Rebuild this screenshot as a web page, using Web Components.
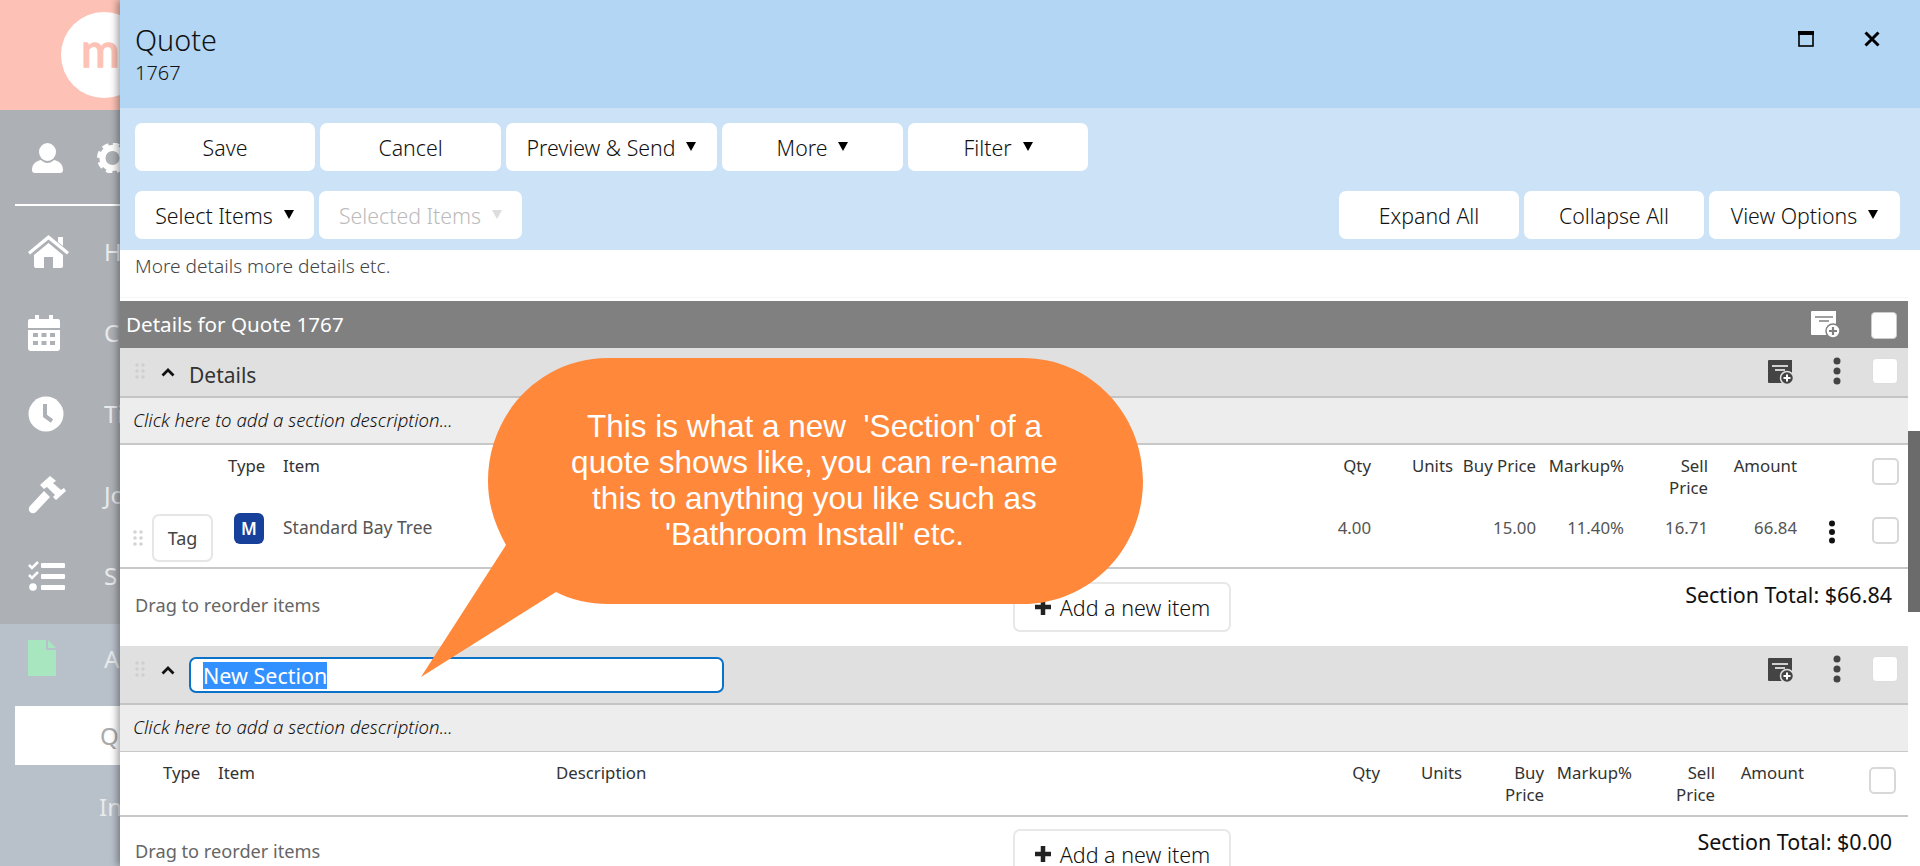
<!DOCTYPE html>
<html><head><meta charset="utf-8"><title>Quote 1767</title>
<style>
html,body{margin:0;padding:0;height:866px;overflow:hidden;background:#fff}
body{font-family:"Noto Sans","Open Sans",sans-serif;color:#222}
svg{display:block;flex:none}
</style></head><body>
<template id="t-app"><style>
:host{display:flex;width:1920px;height:866px;overflow:hidden;position:relative}
</style><slot name="side"></slot><slot name="main"></slot><slot name="over"></slot></template>

<template id="t-side"><style>
:host{display:flex;flex-direction:column;width:120px;flex:none;height:866px;overflow:hidden;background:#adb1b6}
.top{height:110px;background:#fdc2b5;flex:none;padding:12px 0 0 61px;box-sizing:border-box}
.logo{width:86px;height:86px;border-radius:50%;background:#fff;box-sizing:border-box;padding-left:20px;font:400 47px/74px Lato,sans-serif;-webkit-text-stroke:1.500px #fdc2b5;color:#fdc2b5;overflow:hidden;white-space:nowrap}
.me{height:94px;flex:none;display:flex;padding:33px 0 0 32px;box-sizing:border-box;gap:34px}
hr{border:0;height:2px;background:#fff;margin:0 0 5px 15px;flex:none}
.low{flex:1;background:#b8c0ca;padding-top:14px}
</style><div class="top"><div class="logo">m</div></div>
<div class="me"><slot name="me"></slot></div><hr>
<slot name="nav"></slot>
<div class="low"><slot name="low"></slot></div></template>

<template id="t-nav"><style>
:host{display:flex;align-items:center;height:81px;box-sizing:border-box;padding-left:28px;overflow:hidden;white-space:nowrap;font-size:24px;color:#e8eaec}
.i{width:76px;flex:none}
:host([active]){background:#fff;color:#aaa;margin-left:15px;height:59px;padding-left:0;margin-top:14px;margin-bottom:11px}
:host([active]) .i{width:85px}
:host([sub]){padding-left:0;height:60px}
:host([sub]) .i{width:99px}
</style><div class="i"><slot name="icon"></slot></div><slot></slot></template>

<template id="t-panel"><style>
:host{display:flex;flex-direction:column;width:1800px;flex:none;height:866px;position:relative;background:#fff;box-shadow:-3px 0 7px rgba(0,0,0,.35)}
.head{height:108px;background:#b2d6f4;flex:none;display:flex;justify-content:space-between;padding:22px 40px 0 15px;box-sizing:border-box}
h1{margin:0;font-weight:300;font-size:28.800px;line-height:36px;color:#111}
.sub{font-size:20px;line-height:30px;color:#111;font-weight:300}
.win{display:flex;gap:50px;padding-top:9px}
.tools{height:142px;background:#cbe2f7;flex:none;padding:15px 20px 0 15px;box-sizing:border-box;display:flex;flex-direction:column;gap:20px}
.r{display:flex;gap:5px}
.sp{flex:1}
.body{flex:1;display:flex;min-height:0}
.content{flex:1;min-width:0;overflow:hidden}
.bar{width:12px;flex:none;padding-top:181px;box-sizing:border-box}
.thumb{height:181px;background:#6b6b6b}
.note{height:48px;box-sizing:border-box;padding:4px 0 0 15px;font-size:19.100px;font-weight:300;line-height:24px;color:#444;border-bottom:1px solid #f6f6f6;margin-bottom:3px}
</style>
<div class="head"><div><h1>Quote</h1><div class="sub">1767</div></div>
<div class="win">
<svg width="16" height="16" viewBox="0 0 16 16"><rect x="1" y="1" width="14" height="14" fill="none" stroke="#000" stroke-width="1.6"/><rect x="0" y="0" width="16" height="4" fill="#000"/></svg>
<svg width="16" height="16" viewBox="0 0 16 16"><path d="M1.500 1.500l13 13M14.500 1.500l-13 13" stroke="#000" stroke-width="3"/></svg>
</div></div>
<div class="tools"><div class="r"><slot name="row1"></slot></div>
<div class="r"><slot name="row2"></slot><div class="sp"></div><slot name="row2r"></slot></div></div>
<div class="body"><div class="content"><div class="note">More details more details etc.</div><slot></slot></div><div class="bar"><div class="thumb"></div></div></div></template>

<template id="t-btn"><style>
:host{display:flex;align-items:center;justify-content:center;gap:11px;height:48px;box-sizing:border-box;background:#fff;border-radius:7px;font-size:21.300px;font-weight:300;color:#111;white-space:nowrap;flex:none}
:host([off]){color:#bbb}
.c{width:0;height:0;border-left:5.500px solid transparent;border-right:5.500px solid transparent;border-top:9px solid currentColor;margin-top:-1px;display:none;color:#000}
:host([caret]) .c{display:block}
:host([off]) .c{color:#ddd}
</style><slot></slot><i class="c"></i></template>

<template id="t-bar"><style>
:host{display:flex;justify-content:space-between;height:47px;background:#808080;color:#fff;font-size:20.600px;line-height:27px;padding:10px 11px 0 6px;box-sizing:border-box}
.r{display:flex;gap:30px}
.cb{width:26px;height:27px;background:#fff;border:1px solid #ccc;border-radius:4px;box-sizing:border-box;margin-top:1px}
</style><div>Details for Quote 1767</div><div class="r"><slot></slot><div class="cb"></div></div></template>

<template id="t-shead"><style>
:host{display:flex;align-items:flex-start;background:#e0e0e0;border-bottom:2px solid #c4c4c4;height:50px;box-sizing:border-box;padding-left:15px;font-size:21px;color:#333}
:host([tall]){height:59px}
.d{margin-top:15px;flex:none}
.c{margin:20px 14px 0 16px;flex:none}
.t{flex:1;min-width:0;padding-top:13px;line-height:28px}
:host([tall]) .t{padding-top:11px}
.ic{margin:12px 39px 0 0;flex:none}
.m{margin:9px 31px 0 0;flex:none}
.b{width:26px;height:26px;margin:10px 10px 0 0;background:#fff;border:1px solid #ddd;border-radius:4px;box-sizing:border-box;flex:none}
</style>
<svg class="d" width="10" height="16" viewBox="0 0 10 16" fill="#cfcfcf"><circle cx="2" cy="2" r="1.800"/><circle cx="8" cy="2" r="1.800"/><circle cx="2" cy="8" r="1.800"/><circle cx="8" cy="8" r="1.800"/><circle cx="2" cy="14" r="1.800"/><circle cx="8" cy="14" r="1.800"/></svg>
<svg class="c" width="14" height="9" viewBox="0 0 14 9"><path d="M1.500 7.500L7 2l5.500 5.500" fill="none" stroke="#111" stroke-width="2.800"/></svg>
<div class="t"><slot></slot></div>
<svg class="ic" width="26" height="25" viewBox="0 0 26 25"><path d="M1 0h23v23H1a1 1 0 0 1-1-1V1a1 1 0 0 1 1-1z" fill="#444"/><path d="M4 6h16M7 10h10" stroke="#fff" stroke-width="1.500"/><circle cx="19" cy="18" r="6.500" fill="#444" stroke="#e0e0e0" stroke-width="1.500"/><path d="M15.500 18h7M19 14.500v7" stroke="#fff" stroke-width="2"/></svg>
<svg class="m" width="8" height="28" viewBox="0 0 8 28" fill="#444"><circle cx="4" cy="4" r="3.500"/><circle cx="4" cy="14" r="3.500"/><circle cx="4" cy="24" r="3.500"/></svg>
<div class="b"></div></template>

<template id="t-input"><style>
:host{display:block;width:535px;height:36px;box-sizing:border-box;background:#fff;border:2px solid #0a72c8;border-radius:7px;padding:3px 12px;font-size:21.500px;line-height:26px;color:#fff}
span{background:#3390ff;display:inline-block;line-height:27px}
</style><span><slot></slot></span></template>

<template id="t-desc"><style>
:host{display:block;background:#ededed;border-bottom:2px solid #c8c8c8;height:47px;box-sizing:border-box;padding:10px 0 0 13px;font-size:18.600px;font-weight:300;line-height:24px;font-style:italic;color:#111}
:host([thin]){border-bottom-width:1px}
</style><slot></slot></template>

<template id="t-row"><style>
:host{display:grid;align-items:start;font-size:16.800px;line-height:22px;box-sizing:border-box;color:#333}
:host([type=h1]){grid-template-columns:108px 55px 1017px 71px 82px 83px 88px 84px 89px 75px 36px;height:54px;padding-top:10px}
:host([type=r1]){grid-template-columns:108px 55px 1017px 71px 82px 83px 88px 84px 89px 75px 36px;height:70px;border-bottom:2px solid #c8c8c8;color:#555}
:host([type=h2]){grid-template-columns:43px 55px 338px 764px 60px 82px 82px 88px 83px 89px 65px 39px;height:65px;padding-top:10px;border-bottom:2px solid #c8c8c8}
</style><slot></slot></template>

<template id="t-cell"><style>
:host{display:block;min-width:0}
:host([r]){text-align:right}
</style><slot></slot></template>

<template id="t-tag"><style>
:host{display:flex;align-items:flex-start}
.d{margin:31px 9px 0 13px;flex:none}
.t{width:61px;height:48px;box-sizing:border-box;margin-top:15px;background:#fff;border:2px solid #e6e6e6;border-radius:7px;display:flex;align-items:center;justify-content:center;font-size:18px;color:#444;flex:none}
</style><svg class="d" width="10" height="16" viewBox="0 0 10 16" fill="#d4d4d4"><circle cx="2" cy="2" r="1.800"/><circle cx="8" cy="2" r="1.800"/><circle cx="2" cy="8" r="1.800"/><circle cx="8" cy="8" r="1.800"/><circle cx="2" cy="14" r="1.800"/><circle cx="8" cy="14" r="1.800"/></svg><div class="t"><slot></slot></div></template>

<template id="t-badge"><style>
:host{display:flex;width:30px;height:31px;margin:14px 0 0 6px;background:#17409a;border-radius:6px;color:#fff;align-items:center;justify-content:center;font-size:17px;font-weight:600}
</style><slot></slot></template>

<template id="t-check"><style>
:host{display:block;width:27px;height:27px;box-sizing:border-box;background:#fff;border:2px solid #d8d8d8;border-radius:5px}
</style></template>

<template id="t-foot"><style>
:host{display:grid;grid-template-columns:893px 218px 1fr;height:77px;box-sizing:border-box;padding-top:13px;align-items:start}
:host([tall]){height:120px;padding-top:12px}
.l{padding:10px 0 0 15px;font-size:18.200px;line-height:26px;color:#666}
:host([tall]) .l{padding-top:9px}
.a{height:50px;box-sizing:border-box;background:#fff;border:2px solid #e8e8e8;border-radius:7px;display:flex;align-items:center;justify-content:center;gap:8px;font-size:21.500px;font-weight:300;color:#111}
.t{text-align:right;padding:0 16px 0 0;font-size:21.500px;line-height:26px;color:#111;white-space:nowrap}
</style><div class="l">Drag to reorder items</div><div class="a"><svg width="18" height="18" viewBox="0 0 18 18"><path d="M9 1v16M1 9h16" stroke="#222" stroke-width="4.500"/></svg>Add a new item</div><div class="t"><slot></slot></div></template>

<template id="t-callout"><style>
:host{position:absolute;left:415px;top:350px;width:740px;height:335px;display:block}
svg{position:absolute;left:0;top:0}
.x{position:absolute;left:72px;top:58px;width:655px;text-align:center;font:31.500px/36px "Liberation Sans",Arial,sans-serif;color:#fff;white-space:pre}
</style>
<svg width="740" height="335" viewBox="415 350 740 335"><path d="M608 358H1023C1090 358 1143 413 1143 481C1143 549 1090 604 1023 604H608C590 604 571 600 556 592L421 677L506 545C495 525 488 505 488 481C488 413 541 358 608 358Z" fill="#ff883a"/></svg>
<div class="x"><slot></slot></div></template>

<script>
const def=(n,t)=>customElements.define(n,class extends HTMLElement{constructor(){super();this.attachShadow({mode:'open'}).appendChild(document.getElementById(t).content.cloneNode(true))}});
[['x-app','t-app'],['x-side','t-side'],['x-nav','t-nav'],['x-panel','t-panel'],['x-btn','t-btn'],['x-bar','t-bar'],['x-shead','t-shead'],['x-input','t-input'],['x-desc','t-desc'],['x-row','t-row'],['x-cell','t-cell'],['x-tag','t-tag'],['x-badge','t-badge'],['x-check','t-check'],['x-foot','t-foot'],['x-callout','t-callout']].forEach(a=>def(a[0],a[1]));
</script>

<x-app>
<x-side slot="side">
<svg slot="me" width="31" height="30" viewBox="0 0 31 30" fill="#fff"><ellipse cx="15.500" cy="9" rx="8.500" ry="9"/><path d="M0 27c0-6 4-9 9-10 2 2 4 3 6.500 3s4.500-1 6.500-3c5 1 9 4 9 10 0 2-1 3-3 3H3c-2 0-3-1-3-3z"/></svg>
<svg slot="me" width="31" height="30" viewBox="0 0 31 30"><circle cx="15.500" cy="15" r="10" fill="none" stroke="#fff" stroke-width="6"/><circle cx="15.500" cy="15" r="13" fill="none" stroke="#fff" stroke-width="5" stroke-dasharray="6 4.200"/></svg>
<x-nav slot="nav">H<svg slot="icon" width="41" height="33" viewBox="0 0 41 33" fill="#fff"><path d="M20.500 0L41 17l-2 2.500L20.500 4.500 2 19.500 0 17z"/><path d="M30 2h5v9l-5-4z"/><path d="M6 20L20.500 8 35 20v11a2 2 0 0 1-2 2H25V22h-9v11H8a2 2 0 0 1-2-2z"/></svg></x-nav>
<x-nav slot="nav">C<svg slot="icon" width="32" height="36" viewBox="0 0 32 36" fill="#fff"><path d="M7 0h4v5H7zM21 0h4v5h-4z"/><path d="M2 4h28a2 2 0 0 1 2 2v7H0V6a2 2 0 0 1 2-2zM0 15h32v18a3 3 0 0 1-3 3H3a3 3 0 0 1-3-3z"/><g fill="#adb1b6"><rect x="5" y="18" width="5" height="4"/><rect x="13.500" y="18" width="5" height="4"/><rect x="22" y="18" width="5" height="4"/><rect x="5" y="26" width="5" height="4"/><rect x="13.500" y="26" width="5" height="4"/><rect x="22" y="26" width="5" height="4"/></g></svg></x-nav>
<x-nav slot="nav">Ti<svg slot="icon" width="36" height="36" viewBox="0 0 36 36"><circle cx="18" cy="18" r="17.500" fill="#fff"/><path d="M17 8v12l7 5" fill="none" stroke="#adb1b6" stroke-width="4"/></svg></x-nav>
<x-nav slot="nav">Jo<svg slot="icon" width="38" height="38" viewBox="0 0 38 38" fill="#fff"><path d="M12 9L22 0l5 4 1 1-3 2 8 7 3-2 2 3-10 9-3-3 2-2-8-8-3 2z"/><path d="M16 15l6 6L8 36a3.500 3.500 0 0 1-6-6z"/></svg></x-nav>
<x-nav slot="nav" style="height:89px;padding-bottom:8px">S<svg slot="icon" width="37" height="30" viewBox="0 0 37 30" fill="#fff"><rect x="13" y="2" width="24" height="5" rx="1"/><rect x="13" y="13" width="24" height="5" rx="1"/><rect x="13" y="24" width="24" height="5" rx="1"/><path d="M1 4l3 3 6-6M1 14l3 3 6-6" fill="none" stroke="#fff" stroke-width="2.500"/><circle cx="5" cy="26" r="3.800"/></svg></x-nav>
<x-nav slot="low" style="margin-top:-14px;height:68px">A<svg slot="icon" width="28" height="36" viewBox="0 0 28 36" fill="#a8e6bf"><path d="M0 0h18v10h10v26H0z"/><path d="M20 0l8 8h-8z"/></svg></x-nav>
<x-nav slot="low" active>Q</x-nav>
<x-nav slot="low" sub>In</x-nav>
</x-side>
<x-panel slot="main">
<x-btn slot="row1" style="width:180px">Save</x-btn>
<x-btn slot="row1" style="width:181px">Cancel</x-btn>
<x-btn slot="row1" style="width:211px" caret>Preview &amp; Send</x-btn>
<x-btn slot="row1" style="width:181px" caret>More</x-btn>
<x-btn slot="row1" style="width:180px" caret>Filter</x-btn>
<x-btn slot="row2" style="width:179px" caret>Select Items</x-btn>
<x-btn slot="row2" style="width:203px" caret off>Selected Items</x-btn>
<x-btn slot="row2r" style="width:180px">Expand All</x-btn>
<x-btn slot="row2r" style="width:180px">Collapse All</x-btn>
<x-btn slot="row2r" style="width:191px" caret>View Options</x-btn>
<x-bar><svg width="30" height="28" viewBox="0 0 30 28"><path d="M1 0h24v24H1a1 1 0 0 1-1-1V1a1 1 0 0 1 1-1z" fill="#fff"/><path d="M4 6h18M8 10h10" stroke="#808080" stroke-width="1.500"/><circle cx="22" cy="20" r="7" fill="#fff" stroke="#808080" stroke-width="1.500"/><path d="M18 20h8M22 16v8" stroke="#808080" stroke-width="2.200"/></svg></x-bar>
<x-shead>Details</x-shead>
<x-desc>Click here to add a section description...</x-desc>
<x-row type="h1"><x-cell></x-cell><x-cell>Type</x-cell><x-cell>Item</x-cell><x-cell r>Qty</x-cell><x-cell r>Units</x-cell><x-cell r>Buy Price</x-cell><x-cell r>Markup%</x-cell><x-cell r style="padding-left:30px">Sell Price</x-cell><x-cell r>Amount</x-cell><x-cell></x-cell><x-cell><x-check style="margin-top:3px"></x-check></x-cell></x-row>
<x-row type="r1"><x-tag>Tag</x-tag><x-badge>M</x-badge><x-cell style="padding-top:17px;font-size:17.500px">Standard Bay Tree</x-cell><x-cell r style="padding-top:18px">4.00</x-cell><x-cell></x-cell><x-cell r style="padding-top:18px">15.00</x-cell><x-cell r style="padding-top:18px">11.40%</x-cell><x-cell r style="padding-top:18px">16.71</x-cell><x-cell r style="padding-top:18px">66.84</x-cell><x-cell style="padding:21px 0 0 31px"><svg width="8" height="24" viewBox="0 0 8 24" fill="#111"><circle cx="4" cy="3.500" r="3"/><circle cx="4" cy="12" r="3"/><circle cx="4" cy="20.500" r="3"/></svg></x-cell><x-cell style="padding-top:18px"><x-check></x-check></x-cell></x-row>
<x-foot>Section Total: $66.84</x-foot>
<x-shead tall><x-input>New Section</x-input></x-shead>
<x-desc thin>Click here to add a section description...</x-desc>
<x-row type="h2"><x-cell></x-cell><x-cell>Type</x-cell><x-cell>Item</x-cell><x-cell>Description</x-cell><x-cell r>Qty</x-cell><x-cell r>Units</x-cell><x-cell r style="padding-left:30px">Buy Price</x-cell><x-cell r>Markup%</x-cell><x-cell r style="padding-left:30px">Sell Price</x-cell><x-cell r>Amount</x-cell><x-cell></x-cell><x-cell><x-check style="margin-top:5px"></x-check></x-cell></x-row>
<x-foot tall>Section Total: $0.00</x-foot>
</x-panel>
<x-callout slot="over">This is what a new  'Section' of a
quote shows like, you can re-name
this to anything you like such as
'Bathroom Install' etc.</x-callout>
</x-app>
</body></html>
